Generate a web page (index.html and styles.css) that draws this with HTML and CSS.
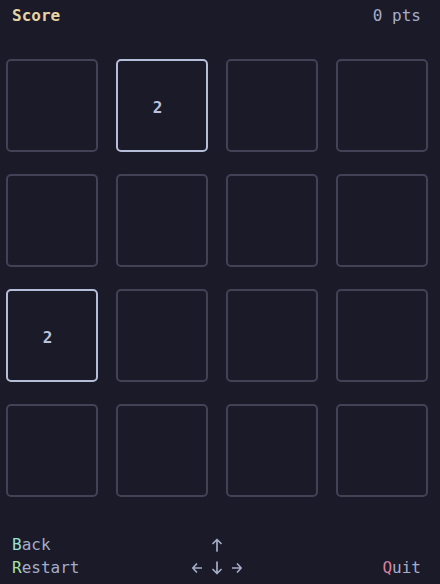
FILE: index.html
```html
<!DOCTYPE html>
<html lang="en">
<head>
<meta charset="utf-8">
<title>2048</title>
<link rel="stylesheet" href="styles.css">
</head>
<body>
<div class="app">
  <header class="header">
    <span class="title">Score</span>
    <span class="score">0 pts</span>
  </header>
  <main class="board">
    <div class="cell"></div>
    <div class="cell filled"><span>2</span></div>
    <div class="cell"></div>
    <div class="cell"></div>
    <div class="cell"></div>
    <div class="cell"></div>
    <div class="cell"></div>
    <div class="cell"></div>
    <div class="cell filled"><span>2</span></div>
    <div class="cell"></div>
    <div class="cell"></div>
    <div class="cell"></div>
    <div class="cell"></div>
    <div class="cell"></div>
    <div class="cell"></div>
    <div class="cell"></div>
  </main>
  <footer class="footer">
    <div class="keys">
      <div><span class="k-back">B</span>ack</div>
      <div><span class="k-restart">R</span>estart</div>
    </div>
    <div class="arrows">
      <div class="arrow-row">
        <svg class="arrow" viewBox="0 0 10 14" aria-label="up"><path d="M5 13V1.5M1 5.5L5 1.5L9 5.5"/></svg>
      </div>
      <div class="arrow-row">
        <svg class="arrow" viewBox="0 0 10 14" aria-label="left"><path d="M9.5 7H1M4.5 3L0.8 7L4.5 11"/></svg>
        <svg class="arrow" viewBox="0 0 10 14" aria-label="down"><path d="M5 1V12.5M1 8.5L5 12.5L9 8.5"/></svg>
        <svg class="arrow" viewBox="0 0 10 14" aria-label="right"><path d="M0.5 7H9M5.5 3L9.2 7L5.5 11"/></svg>
      </div>
    </div>
    <div class="quit">
      <div><span class="k-quit">Q</span>uit</div>
    </div>
  </footer>
</div>
</body>
</html>
```
FILE: styles.css
```css
* { box-sizing: border-box; }
html, body {
  margin: 0;
  padding: 0;
  background: #1a1a28;
}
.app {
  width: 440px;
  height: 584px;
  display: flex;
  flex-direction: column;
  font-family: "DejaVu Sans Mono", "Liberation Mono", monospace;
  font-size: 16px;
  line-height: 23px;
  color: #a6adc8;
}
.header {
  display: flex;
  justify-content: space-between;
  padding: 4px 19px 0 12px;
}
.title {
  color: #e6d3a3;
  font-weight: bold;
}
.score {
  color: #a6adc8;
}
.board {
  display: grid;
  grid-template-columns: repeat(4, 92px);
  grid-template-rows: repeat(4, 93px);
  column-gap: 18px;
  row-gap: 22px;
  padding-left: 6px;
  margin-top: 32px;
}
.cell {
  border: 2px solid #414255;
  border-radius: 5px;
  display: flex;
  align-items: center;
  justify-content: center;
  padding: 3px 9px 0 0;
  color: #bac2de;
  font-weight: bold;
}
.cell.filled {
  border-color: #b6bdd8;
}
.footer {
  display: grid;
  grid-template-columns: 1fr auto 1fr;
  align-items: end;
  padding: 0 19px 0 12px;
  margin-top: 36px;
  color: #a6adc8;
}
.arrows {
  display: flex;
  flex-direction: column;
  align-items: center;
}
.arrow-row {
  height: 23px;
  display: flex;
  align-items: center;
  gap: 10px;
}
.arrow {
  width: 10px;
  height: 14px;
  fill: none;
  stroke: #a6adc8;
  stroke-width: 1.7;
  stroke-linecap: round;
  stroke-linejoin: round;
}
.quit {
  text-align: right;
}
.k-back { color: #94e2d5; }
.k-restart { color: #a6e3a1; }
.k-quit { color: #dc7f9b; }
```
